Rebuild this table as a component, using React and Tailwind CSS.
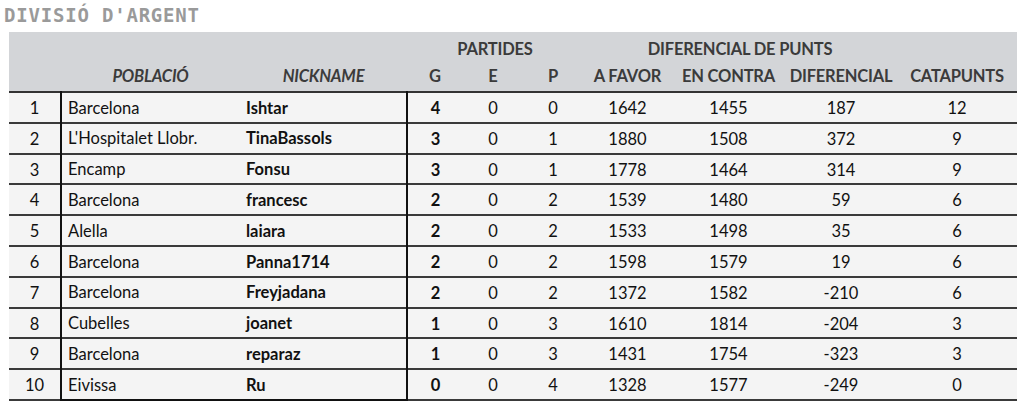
import React from 'react'

const ROWS = [
  [1, 'Barcelona', 'Ishtar', 4, 0, 0, 1642, 1455, 187, 12],
  [2, "L'Hospitalet Llobr.", 'TinaBassols', 3, 0, 1, 1880, 1508, 372, 9],
  [3, 'Encamp', 'Fonsu', 3, 0, 1, 1778, 1464, 314, 9],
  [4, 'Barcelona', 'francesc', 2, 0, 2, 1539, 1480, 59, 6],
  [5, 'Alella', 'laiara', 2, 0, 2, 1533, 1498, 35, 6],
  [6, 'Barcelona', 'Panna1714', 2, 0, 2, 1598, 1579, 19, 6],
  [7, 'Barcelona', 'Freyjadana', 2, 0, 2, 1372, 1582, -210, 6],
  [8, 'Cubelles', 'joanet', 1, 0, 3, 1610, 1814, -204, 3],
  [9, 'Barcelona', 'reparaz', 1, 0, 3, 1431, 1754, -323, 3],
  [10, 'Eivissa', 'Ru', 0, 0, 4, 1328, 1577, -249, 0],
]

const cols = [52, 179, 167, 56, 60, 60, 89, 113, 112, 120]

export default function App() {
  return (
    <div className="w-[1024px] h-[405px] bg-white overflow-hidden" style={{ fontFamily: 'Lato, "Open Sans", sans-serif' }}>
      {/* title */}
      <div className="pl-[4px] pt-[4px] h-[32px] text-[19px] font-bold tracking-[0.8px] text-[#9a9a9a] leading-[22px]"
           style={{ fontFamily: '"DejaVu Sans Mono", "Liberation Mono", monospace' }}>
        DIVISIÓ D'ARGENT
      </div>

      <table className="ml-[9px] w-[1008px] border-collapse table-fixed text-[16.5px] text-[#111]">
        <colgroup>
          {cols.map((w, i) => <col key={i} style={{ width: w }} />)}
        </colgroup>
        <thead className="bg-[#d3d5d8] text-[#3b3b3b] font-bold">
          <tr className="h-[30px]">
            <th colSpan={3}></th>
            <th colSpan={3} className="text-center font-bold pt-[4px] tracking-[-0.2px]">PARTIDES</th>
            <th colSpan={3} className="text-center font-bold pt-[4px] tracking-[-0.2px]">DIFERENCIAL DE PUNTS</th>
            <th></th>
          </tr>
          <tr className="h-[30px] border-b-2 border-[#333] tracking-[-0.2px]">
            <th></th>
            <th className="italic font-bold text-center">POBLACIÓ</th>
            <th className="italic font-bold text-center">NICKNAME</th>
            <th className="font-bold text-center">G</th>
            <th className="font-bold text-center">E</th>
            <th className="font-bold text-center">P</th>
            <th className="font-bold text-center">A FAVOR</th>
            <th className="font-bold text-center">EN CONTRA</th>
            <th className="font-bold text-center">DIFERENCIAL</th>
            <th className="font-bold text-center">CATAPUNTS</th>
          </tr>
        </thead>
        <tbody className="bg-[#f4f4f4]">
          {ROWS.map((r, idx) => {
            const last = idx === ROWS.length - 1
            return (
              <tr key={r[0]} className="h-[30.8px] border-b-2 border-[#3a3a3a]">
                <td className="text-center pt-[2px]">{r[0]}</td>
                <td className={`pl-[6px] pt-[1px] border-l-2 border-[#111] ${last ? 'border-b-2' : ''}`}>{r[1]}</td>
                <td className={`pl-[6px] pt-[1px] font-bold border-r-2 border-[#111] ${last ? 'border-b-2' : ''}`}>{r[2]}</td>
                <td className="text-center font-bold pt-[2px]">{r[3]}</td>
                <td className="text-center pt-[2px]">{r[4]}</td>
                <td className="text-center pt-[2px]">{r[5]}</td>
                <td className="text-center pt-[2px]">{r[6]}</td>
                <td className="text-center pt-[2px]">{r[7]}</td>
                <td className="text-center pt-[2px]">{r[8]}</td>
                <td className="text-center pt-[2px]">{r[9]}</td>
              </tr>
            )
          })}
        </tbody>
      </table>
    </div>
  )
}
